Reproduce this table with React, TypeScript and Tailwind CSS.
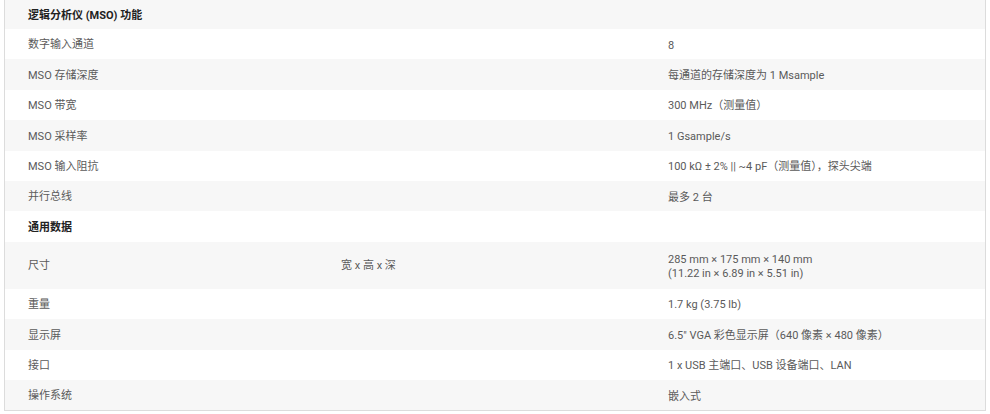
import React from "react";

type Row = { a: string; b?: string; c?: React.ReactNode; section?: boolean; tall?: boolean };

const rows: Row[] = [
  { a: "逻辑分析仪 (MSO) 功能", section: true },
  { a: "数字输入通道", c: "8" },
  { a: "MSO 存储深度", c: "每通道的存储深度为 1 Msample" },
  { a: "MSO 带宽", c: "300 MHz（测量值）" },
  { a: "MSO 采样率", c: "1 Gsample/s" },
  { a: "MSO 输入阻抗", c: "100 kΩ ± 2% || ~4 pF（测量值），探头尖端" },
  { a: "并行总线", c: "最多 2 台" },
  { a: "通用数据", section: true },
  {
    a: "尺寸",
    b: "宽 x 高 x 深",
    tall: true,
    c: (
      <>
        <div>285 mm × 175 mm × 140 mm</div>
        <div>(11.22 in × 6.89 in × 5.51 in)</div>
      </>
    ),
  },
  { a: "重量", c: "1.7 kg (3.75 lb)" },
  { a: "显示屏", c: "6.5\" VGA 彩色显示屏（640 像素 × 480 像素）" },
  { a: "接口", c: "1 x USB 主端口、USB 设备端口、LAN" },
  { a: "操作系统", c: "嵌入式" },
];

export default function App() {
  return (
    <div
      className="w-[990px] h-[414px] bg-white pl-[4px] pr-[4px]"
      style={{ fontFamily: 'Roboto, "Noto Sans CJK SC", sans-serif' }}
    >
      <div className="border-l border-r border-b border-[#dcdcdc] text-[11px] text-[#5a5a5a]">
        {rows.map((r, i) => (
          <div
            key={i}
            className={`grid grid-cols-[313px_327px_1fr] items-center pt-[3px] ${
              i === 0 ? "h-[29px]" : r.tall ? "h-[47px]" : "h-[30.4px]"
            } ${i % 2 === 0 ? "bg-[#f7f7f7]" : "bg-white"}`}
          >
            <div className={`pl-[23px] ${r.section ? "font-bold text-[#222]" : ""}`}>{r.a}</div>
            <div className="pl-[23px]">{r.b ?? ""}</div>
            <div className="pl-[23px] leading-[14px]">{r.c ?? ""}</div>
          </div>
        ))}
      </div>
    </div>
  );
}
